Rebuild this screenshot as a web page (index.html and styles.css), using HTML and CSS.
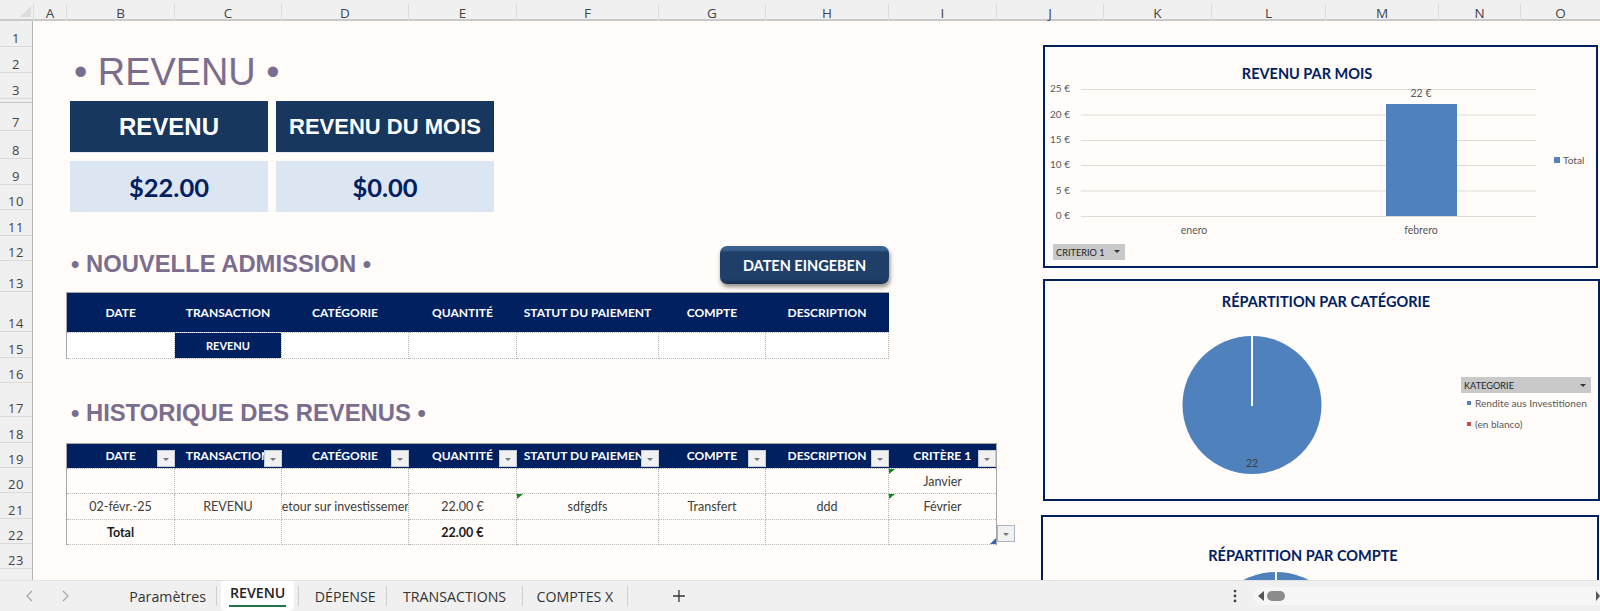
FILE: index.html
```html
<!DOCTYPE html>
<html lang="fr">
<head>
<meta charset="utf-8">
<title>REVENU</title>
<link rel="stylesheet" href="styles.css">
</head>
<body>
<div class="app">
  <div class="col-head">
    <div class="corner"><svg width="33" height="21" viewBox="0 0 33 21"><polygon points="20,17 31,17 31,6" fill="#dcdcdc"/></svg></div>
    <div class="col-letter">A</div><div class="col-letter">B</div><div class="col-letter">C</div><div class="col-letter">D</div><div class="col-letter">E</div><div class="col-letter">F</div><div class="col-letter">G</div><div class="col-letter">H</div><div class="col-letter">I</div><div class="col-letter">J</div><div class="col-letter">K</div><div class="col-letter">L</div><div class="col-letter">M</div><div class="col-letter">N</div><div class="col-letter">O</div>
  </div>
  <div class="work">
    <div class="row-head">
      <div class="row-num">1</div><div class="row-num">2</div><div class="row-num">3</div><div class="row-num hidden-rows"></div><div class="row-num">7</div><div class="row-num">8</div><div class="row-num">9</div><div class="row-num">10</div><div class="row-num">11</div><div class="row-num">12</div><div class="row-num">13</div><div class="row-num">14</div><div class="row-num">15</div><div class="row-num">16</div><div class="row-num">17</div><div class="row-num">18</div><div class="row-num">19</div><div class="row-num">20</div><div class="row-num">21</div><div class="row-num">22</div><div class="row-num">23</div><div class="row-rest"></div>
    </div>
    <div class="sheet">
      <h1 class="title-main">• REVENU •</h1>

      <div class="kpis">
        <div class="kpi-head kpi-head-large">REVENU</div>
        <div class="kpi-head">REVENU DU MOIS</div>
        <div class="kpi-value">$22.00</div>
        <div class="kpi-value">$0.00</div>
      </div>

      <h2 class="section-title title-new">• NOUVELLE ADMISSION •</h2>
      <div class="action-btn">DATEN EINGEBEN</div>

      <div class="table-new">
        <table class="grid-table">
          <colgroup><col class="w-b"><col class="w-c"><col class="w-d"><col class="w-e"><col class="w-f"><col class="w-g"><col class="w-h"></colgroup>
          <tr class="h40"><th>DATE</th><th>TRANSACTION</th><th>CATÉGORIE</th><th>QUANTITÉ</th><th>STATUT DU PAIEMENT</th><th>COMPTE</th><th>DESCRIPTION</th></tr>
          <tr class="h26"><td></td><td class="cell-navy">REVENU</td><td></td><td></td><td></td><td></td><td></td></tr>
        </table>
      </div>

      <h2 class="section-title title-hist">• HISTORIQUE DES REVENUS •</h2>

      <div class="table-hist">
        <table class="grid-table hist">
          <colgroup><col class="w-b"><col class="w-c"><col class="w-d"><col class="w-e"><col class="w-f"><col class="w-g"><col class="w-h"><col class="w-i"></colgroup>
          <tr class="h25">
            <th>DATE<span class="filter"></span></th>
            <th>TRANSACTION<span class="filter"></span></th>
            <th>CATÉGORIE<span class="filter"></span></th>
            <th>QUANTITÉ<span class="filter"></span></th>
            <th>STATUT DU PAIEMENT<span class="filter"></span></th>
            <th>COMPTE<span class="filter"></span></th>
            <th>DESCRIPTION<span class="filter"></span></th>
            <th>CRITÈRE 1<span class="filter"></span></th>
          </tr>
          <tr class="h25"><td></td><td></td><td></td><td></td><td></td><td></td><td></td><td class="flagged">Janvier</td></tr>
          <tr class="h26"><td>02-févr.-25</td><td>REVENU</td><td><span class="clip">Retour sur investissement</span></td><td>22.00 €</td><td class="flagged">sdfgdfs</td><td>Transfert</td><td>ddd</td><td class="flagged">Février</td></tr>
          <tr class="h25 total"><td>Total</td><td></td><td></td><td>22.00 €</td><td></td><td></td><td></td><td class="resize"></td></tr>
        </table>
        <span class="filter table-dd"></span>
      </div>

      <section class="chart chart-month">
        <svg class="chart-svg" viewBox="1045 47 551 219">
          <text class="c-title" x="1307" y="79">REVENU PAR MOIS</text>
          <g class="c-grid">
            <line x1="1081" x2="1536" y1="89.5" y2="89.5"/><line x1="1081" x2="1536" y1="115" y2="115"/><line x1="1081" x2="1536" y1="140.5" y2="140.5"/><line x1="1081" x2="1536" y1="165.5" y2="165.5"/><line x1="1081" x2="1536" y1="191" y2="191"/><line x1="1081" x2="1536" y1="216.5" y2="216.5"/>
          </g>
          <g class="c-axis">
            <text x="1070" y="92">25 €</text><text x="1070" y="118">20 €</text><text x="1070" y="143">15 €</text><text x="1070" y="168">10 €</text><text x="1070" y="194">5 €</text><text x="1070" y="219">0 €</text>
          </g>
          <rect class="c-blue" x="1386" y="104" width="71" height="112"/>
          <text class="c-mid" x="1421" y="97">22 €</text>
          <text class="c-mid" x="1194" y="234">enero</text>
          <text class="c-mid" x="1421" y="234">febrero</text>
          <rect class="c-blue" x="1554" y="157" width="6" height="6"/>
          <text class="c-lab" x="1563" y="164">Total</text>
          <rect class="c-btn" x="1053" y="244" width="72" height="16"/>
          <text class="c-btn-text" x="1056" y="256">CRITERIO 1</text>
          <polygon class="c-tri" points="1114,250 1120,250 1117,253"/>
        </svg>
      </section>

      <section class="chart chart-cat">
        <svg class="chart-svg" viewBox="1045 281 553 218">
          <text class="c-title" x="1326" y="307">RÉPARTITION PAR CATÉGORIE</text>
          <ellipse class="c-blue" cx="1252" cy="405" rx="69.5" ry="69"/>
          <line class="c-cut" x1="1252" x2="1252" y1="336" y2="406"/>
          <text class="c-mid c-dark" x="1252" y="467">22</text>
          <rect class="c-btn" x="1461" y="377" width="130" height="16"/>
          <text class="c-btn-text" x="1464" y="389">KATEGORIE</text>
          <polygon class="c-tri" points="1580,384 1586,384 1583,387"/>
          <rect class="c-blue" x="1467" y="401" width="4" height="4"/>
          <text class="c-lab" x="1475" y="407">Rendite aus Investitionen</text>
          <rect class="c-red" x="1467" y="422" width="4" height="4"/>
          <text class="c-lab" x="1475" y="428">(en blanco)</text>
        </svg>
      </section>

      <section class="chart chart-acc">
        <svg class="chart-svg" viewBox="1043 517 554 136">
          <text class="c-title" x="1303" y="561">RÉPARTITION PAR COMPTE</text>
          <circle class="c-blue" cx="1276" cy="642" r="70"/>
          <line class="c-cut" x1="1276" x2="1276" y1="570" y2="642"/>
        </svg>
      </section>
    </div>
  </div>
  <div class="tabbar">
    <svg class="nav-arrow" width="12" height="14" viewBox="0 0 12 14"><path d="M8 2 3 7l5 5" fill="none" stroke="#a6a6a6" stroke-width="1.2"/></svg>
    <svg class="nav-arrow nav-next" width="12" height="14" viewBox="0 0 12 14"><path d="M4 2l5 5-5 5" fill="none" stroke="#a6a6a6" stroke-width="1.2"/></svg>
    <div class="tab tab-param">Paramètres</div>
    <span class="tab-sep"></span>
    <div class="tab tab-active"><span class="tab-active-label">REVENU</span></div>
    <span class="tab-sep"></span>
    <div class="tab tab-dep">DÉPENSE</div>
    <span class="tab-sep"></span>
    <div class="tab tab-trans">TRANSACTIONS</div>
    <span class="tab-sep"></span>
    <div class="tab tab-comp">COMPTES X</div>
    <span class="tab-sep"></span>
    <svg class="add-tab" width="14" height="14" viewBox="0 0 14 14"><path d="M7 1v12M1 7h12" stroke="#333" stroke-width="1.3"/></svg>
    <svg class="more" width="4" height="14" viewBox="0 0 4 14"><circle cx="2" cy="2" r="1.4"/><circle cx="2" cy="7" r="1.4"/><circle cx="2" cy="12" r="1.4"/></svg>
    <div class="scroll">
      <span class="scroll-left"></span>
      <span class="scroll-thumb"></span>
      <span class="scroll-right"></span>
    </div>
  </div>
</div>
</body>
</html>
```
FILE: styles.css
```css
* { box-sizing: border-box; }
html, body { margin: 0; padding: 0; }
body { width: 1600px; height: 611px; overflow: hidden; font-family: "Lato", "Liberation Sans", sans-serif; background: #f0f0f0; }
.app { display: flex; flex-direction: column; width: 1600px; height: 611px; }

/* Column headers */
.col-head {
  display: grid;
  grid-template-columns: 33px 33px 108px 107px 127px 108px 142px 107px 123px 108px 107px 108px 114px 113px 82px 80px;
  height: 21px;
  background: #f0f0f0;
  border-bottom: 2px solid #c9c9c9;
  flex: none;
}
.corner { line-height: 0; }
.col-letter {
  display: flex; align-items: center; justify-content: center;
  font: 13.5px "Open Sans", sans-serif; color: #444;
  border-left: 1px solid #dcdcdc;
  margin-top: 4px; padding-bottom: 5px;
}

.work { display: flex; height: 559px; flex: none; }

/* Row headers */
.row-head {
  display: grid; width: 33px; flex: none;
  grid-template-rows: 26px 26px 26px 4px 28px 28px 26px 25px 26px 25px 31px 40px 26px 25px 34px 26px 25px 25px 26px 25px 25px 11px;
  background: #f0f0f0; border-right: 1px solid #b5b5b5;
}
.row-num {
  display: flex; align-items: flex-end; justify-content: center;
  font: 13px/16px "Open Sans", sans-serif; letter-spacing: .6px; color: #444;
  border-bottom: 1px solid #dadada;
}
.hidden-rows { border-bottom: 1px solid #c4c4c4; padding: 0; }

/* Sheet */
.sheet {
  position: relative; overflow: hidden;
  display: grid; width: 1567px;
  grid-template-columns: 33px 108px 107px 127px 108px 142px 107px 123px 108px 107px 108px 114px 113px 82px 80px;
  grid-template-rows: 26px 26px 26px 4px 28px 28px 26px 25px 26px 25px 31px 40px 26px 25px 34px 26px 25px 25px 26px 25px 25px 11px;
  background: #fffcf9;
}
.title-main {
  grid-column: 2 / 8; grid-row: 2 / 4; align-self: center; margin: 0 0 2px 8px;
  font: 400 37.9px/40px "Liberation Sans", sans-serif; color: #7b6d8d;
}
.section-title {
  align-self: center; margin: 0 0 0 5px;
  font: 700 23.8px/28px "Liberation Sans", sans-serif; color: #7b6d8d;
}
.title-new { grid-column: 2 / 7; grid-row: 10 / 12; }
.title-hist { grid-column: 2 / 7; grid-row: 15 / 17; }

.kpis {
  grid-column: 2 / 7; grid-row: 4 / 10; align-self: start;
  display: grid; grid-template-columns: 198px 218px; grid-template-rows: 52px 51px;
  column-gap: 8px; row-gap: 8px; padding: 2px 0 0 4px;
}
.kpi-head {
  display: flex; align-items: center; justify-content: center;
  background: #17375e; color: #fff;
  font: 700 22px "Liberation Sans", sans-serif;
  border-bottom: 1px solid #e6ebf3;
}
.kpi-head-large { font-size: 24px; }
.kpi-value {
  display: flex; align-items: center; justify-content: center;
  background: #dce6f2; color: #002060;
  font-weight: 700; font-size: 25.5px;
}

.action-btn {
  grid-column: 7 / 9; grid-row: 10 / 12; justify-self: end; align-self: start;
  display: flex; align-items: center; justify-content: center;
  width: 169px; height: 38px; margin: 10px -1px 0 0;
  border-radius: 7px; color: #fff; font-weight: 700; font-size: 14.5px;
  background: linear-gradient(#3b628f 0, #3b628f 4px, #1f3f69 6px, #1f3f69 85%, #16304f 100%);
  box-shadow: 1px 3px 4px rgba(60, 50, 40, .55);
}

/* Tables */
.table-new { grid-column: 2 / 9; grid-row: 12 / 14; }
.table-hist { grid-column: 2 / 10; grid-row: 17 / 21; position: relative; }
.grid-table { border-collapse: collapse; table-layout: fixed; width: 100%; font-size: 12.5px; color: #404040; background: #fff; border-left: 1px solid #a6a6a6; }
.grid-table.hist { background: #fffcf9; border-right: 1px solid #a6a6a6; }
.grid-table th {
  position: relative; overflow: hidden; white-space: nowrap; padding: 0;
  background: #002060; color: #fff; font-weight: 700; font-size: 12px; text-align: center;
  border-top: 1px solid #a6a6a6;
}
.grid-table td {
  position: relative; overflow: hidden; white-space: nowrap; padding: 0; text-align: center;
  border: 1px dotted #b5b5b5;
}
.hist th { padding-bottom: 2px; }
.w-b { width: 108px; }
.w-c { width: 107px; }
.w-d { width: 127px; }
.w-e, .w-i { width: 108px; }
.w-f { width: 142px; }
.w-g { width: 107px; }
.w-h { width: 123px; }
.h40 { height: 40px; }
.h26 { height: 26px; }
.h25 { height: 25px; }
.grid-table td.cell-navy { background: #002060; color: #fff; font-weight: 700; font-size: 11px; }
.clip { display: flex; justify-content: center; overflow: hidden; }
.total td { font-weight: 700; color: #1c1c1c; }

.filter {
  position: absolute; right: 0; bottom: 1px;
  width: 18px; height: 17px; background: #f1f1f1; border: 1px solid #c6ccd6;
}
.filter::after {
  content: ""; position: absolute; left: 5px; top: 7px;
  border: 3px solid transparent; border-top: 3px solid #777; border-bottom: 0;
}
.table-dd { left: 100%; right: auto; top: 82px; bottom: auto; margin-left: 1px; border-color: #a8b4c4; }
.flagged::before {
  content: ""; position: absolute; left: 0; top: 0; width: 6px; height: 5px;
  background: #0a8a17; clip-path: polygon(0 0, 100% 0, 0 100%);
}
.resize::after {
  content: ""; position: absolute; right: 0; bottom: 0; width: 6px; height: 6px;
  background: #3f5fbf; clip-path: polygon(100% 0, 100% 100%, 0 100%);
}

/* Charts float over the sheet */
.chart { position: absolute; border: 2px solid #002060; background: #fffcf9; }
.chart-month { left: 1010px; top: 24px; width: 555px; height: 223px; }
.chart-cat { left: 1010px; top: 258px; width: 557px; height: 222px; }
.chart-acc { left: 1008px; top: 494px; width: 558px; height: 140px; }
.chart-svg { display: block; width: 100%; height: 100%; }
.chart-svg text { font-family: "Lato", sans-serif; }
.chart-svg .c-title { font-size: 14.5px; font-weight: 700; fill: #002060; text-anchor: middle; }
.c-grid line { stroke: #dedbd6; stroke-width: 1; }
.chart-svg .c-axis text { font-size: 10px; fill: #595959; text-anchor: end; }
.chart-svg .c-mid { font-size: 10.5px; fill: #595959; text-anchor: middle; }
.chart-svg .c-dark { fill: #3a3f48; }
.chart-svg .c-lab { font-size: 10.1px; fill: #595959; }
.c-blue { fill: #4f81bd; }
.c-red { fill: #c0504d; }
.c-cut { stroke: #fff; stroke-width: 2; }
.c-btn { fill: #c9c9c9; }
.chart-svg .c-btn-text { font-size: 9.2px; fill: #222; }
.c-tri { fill: #333; }

/* Tab bar */
.tabbar {
  display: flex; align-items: center; height: 31px; flex: none; padding-left: 24px;
  background: #f0f0f0; border-top: 1px solid #e2e2e2;
  font: 14.2px "Open Sans", sans-serif; color: #333;
}
.nav-next { margin-left: 23px; }
.tab { display: flex; align-items: center; justify-content: center; height: 30px; }
.tab-param { width: 98px; margin-left: 48px; }
.tab-sep { width: 1px; height: 20px; background: #d0d0d0; }
.tab-active {
  width: 73px; margin: 0 4px; background: #fff; border-radius: 0 0 5px 5px;
  align-items: flex-start; font-weight: 600; color: #222;
}
.tab-active-label { display: block; height: 26px; line-height: 24px; border-bottom: 2px solid #217346; padding: 0 1px; }
.tab-dep { width: 88px; padding-left: 5px; }
.tab-trans { width: 135px; }
.tab-comp { width: 105px; }
.add-tab { margin-left: 44px; }
.more { margin-left: 547px; fill: #444; }
.scroll {
  display: flex; align-items: center; width: 349px; height: 18px; margin-left: 16px;
  background: #f6f6f6; border-radius: 9px 0 0 9px; padding-left: 5px;
}
.scroll-left { border: 5px solid transparent; border-right: 6px solid #555; border-left: 0; }
.scroll-thumb { width: 18px; height: 10px; margin-left: 3px; border-radius: 5px; background: #8c8c8c; }
.scroll-right { margin-left: auto; border: 5px solid transparent; border-left: 4px solid #555; border-right: 0; }
```
